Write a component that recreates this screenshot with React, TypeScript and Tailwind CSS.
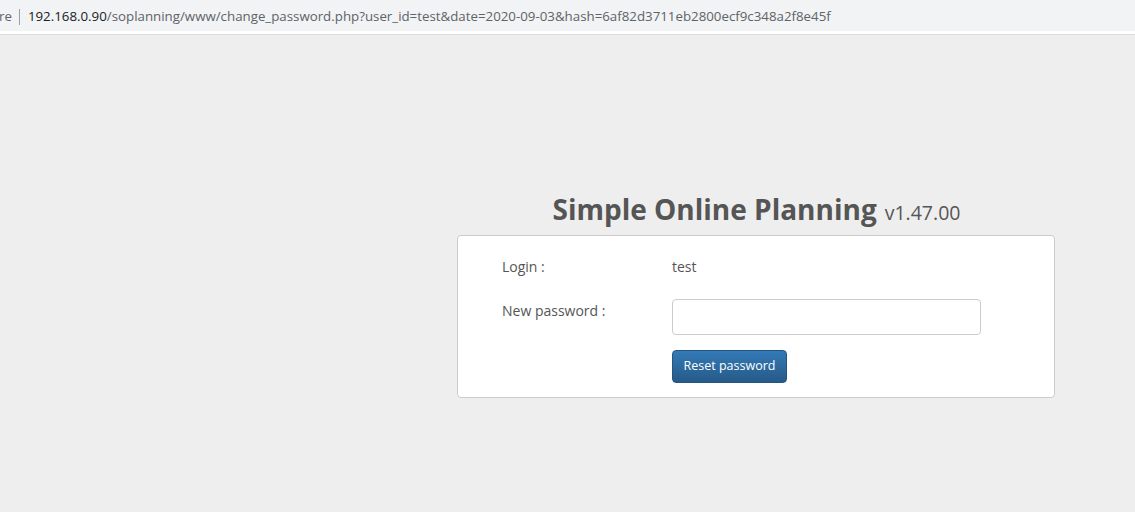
export default function App() {
  return (
    <div
      className="w-[1135px] h-[512px] bg-[#eeeeee] flex flex-col overflow-hidden"
      style={{ fontFamily: '"Open Sans", "Noto Sans", sans-serif' }}
    >
      {/* address bar */}
      <div className="h-[35px] bg-white border-b border-[#dadce0] flex flex-col">
        <div className="h-[31px] bg-[#f1f3f4] flex items-center text-[13.3px] text-[#5f6368] leading-none pt-[2px]">
          <span className="-ml-[1px]">re</span>
          <span className="w-px h-[16px] bg-[#9aa0a6] ml-[7px] mr-[8px]"></span>
          <span className="text-[#202124]">192.168.0.90</span>
          <span>/soplanning/www/change_password.php?user_id=test&amp;date=2020-09-03&amp;hash=6af82d3711eb2800ecf9c348a2f8e45f</span>
        </div>
      </div>

      <div className="pl-[457px] pt-[160px]">
        <div className="w-[598px] flex flex-col">
          <h1 className="text-center text-[#555555] leading-none mb-[12px] ml-[1px]">
            <span className="text-[28px] font-bold">Simple Online Planning</span>
            <span className="text-[19.5px] ml-[8px]">v1.47.00</span>
          </h1>
          <div className="bg-white border border-[#cccccc] rounded-[4px] h-[163px] pl-[44px] pt-[20px] text-[14px] text-[#555555]">
            <div className="flex items-center h-[20px]">
              <div className="w-[170px]">Login :</div>
              <div>test</div>
            </div>
            <div className="flex mt-[23px]">
              <div className="w-[170px] pt-[1px]">New password :</div>
              <div className="flex flex-col">
                <input
                  type="password"
                  className="w-[309px] h-[36px] border border-[#cccccc] rounded-[4px] bg-white px-3 outline-none"
                />
                <button className="mt-[15px] w-[115px] h-[33px] rounded-[4px] border border-[#245580] bg-gradient-to-b from-[#337ab7] to-[#265a88] text-white text-[12.5px] leading-none">
                  Reset password
                </button>
              </div>
            </div>
          </div>
        </div>
      </div>
    </div>
  );
}
